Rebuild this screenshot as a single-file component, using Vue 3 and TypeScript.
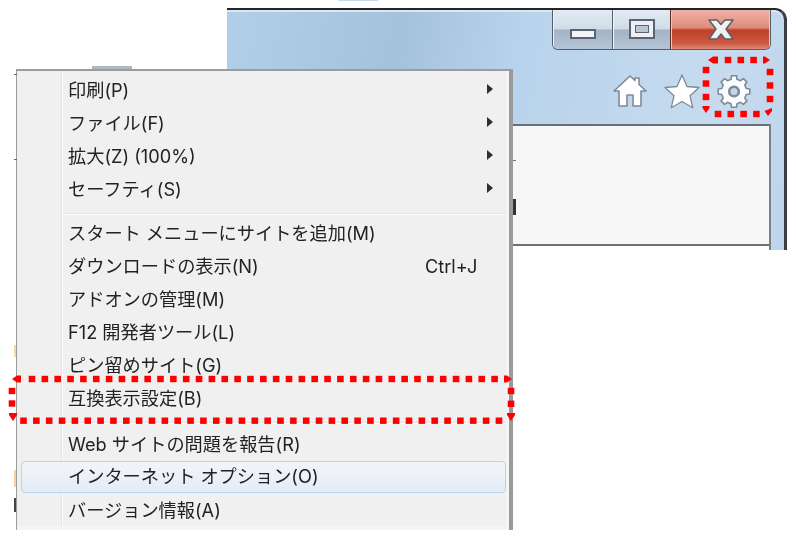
<script setup lang="ts">
interface Item { label: string; arrow?: boolean; shortcut?: string; hover?: boolean }
interface Dot { x: number; y: number }

const groups: Item[][] = [
  [
    { label: '印刷(P)', arrow: true },
    { label: 'ファイル(F)', arrow: true },
    { label: '拡大(Z) (100%)', arrow: true },
    { label: 'セーフティ(S)', arrow: true },
  ],
  [
    { label: 'スタート メニューにサイトを追加(M)' },
    { label: 'ダウンロードの表示(N)', shortcut: 'Ctrl+J' },
    { label: 'アドオンの管理(M)' },
    { label: 'F12 開発者ツール(L)' },
    { label: 'ピン留めサイト(G)' },
    { label: '互換表示設定(B)' },
  ],
  [
    { label: 'Web サイトの問題を報告(R)' },
    { label: 'インターネット オプション(O)', hover: true },
    { label: 'バージョン情報(A)' },
  ],
]

function run(x: number, y: number, dx: number, dy: number, n: number): Dot[] {
  return Array.from({ length: n }, (_, i) => ({ x: x + dx * i, y: y + dy * i }))
}

const dots: Dot[] = [
  ...run(728, 60, 12.8, 0, 3),
  ...run(718, 114, 12.8, 0, 4),
  ...run(706, 70, 0, 13.5, 3),
  ...run(770, 72, 0, 13.5, 3),
  ...run(32, 379, 12.85, 0, 37),
  ...run(23.5, 420.7, 12.85, 0, 38),
  ...run(12, 391, 0, 12.5, 2),
  ...run(511, 391, 0, 12.8, 2),
]

const arrows: string[] = [
  '708,60 713,56.500 718,56.500 718,63.500 713,63.500',
  '770,60 765,56.500 763,56.500 763,63.500 765,63.500',
  '706,113 702.500,108 702.500,106 709.500,106 709.500,108',
  '768,116 764.500,111 772,108 772,111',
  '12,379 17,375.500 21,375.500 21,382.500 17,382.500',
  '512,379 507,375.500 504,375.500 504,382.500 507,382.500',
  '13,421 9,415 9,413 17,413 17,415',
  '511,421 507,415 507,413 515,413 515,415',
]

function gearPath(): string {
  const cx = 17, cy = 16.500, ro = 16, ri = 12.600, n = 8
  const pts: string[] = []
  for (let i = 0; i < n; i++) {
    const a = (i / n) * Math.PI * 2 - Math.PI / 2
    const w = Math.PI / n
    const list: [number, number][] = [
      [ri, a - w * 0.62],
      [ro, a - w * 0.4],
      [ro, a + w * 0.4],
      [ri, a + w * 0.62],
    ]
    for (const [r, t] of list) {
      pts.push(`${(cx + r * Math.cos(t)).toFixed(2)} ${(cy + r * Math.sin(t)).toFixed(2)}`)
    }
  }
  return 'M' + pts.join('L') + 'Z'
}
const gear = gearPath()

const ticks = [
  { x: 14, y: 74, w: 3, h: 1, c: '#666' },
  { x: 14, y: 159, w: 3, h: 1, c: '#666' },
  { x: 14, y: 345, w: 2, h: 12, c: '#f3d9b0' },
  { x: 14, y: 470, w: 2, h: 17, c: '#f5d0a0' },
  { x: 14, y: 498, w: 2, h: 14, c: '#444' },
  { x: 513, y: 160, w: 3, h: 1, c: '#777' },
  { x: 513, y: 199, w: 3, h: 16, c: '#333' },
]
</script>

<template>
  <div class="stage">
    <div class="tab-sliver"></div>
    <div class="tab-stub"></div>
    <div class="window">
      <div class="caption">
        <div class="controls">
          <div class="btn min"><span class="min-glyph"></span></div>
          <div class="btn max"><span class="max-glyph"><span class="max-inner"></span></span></div>
          <div class="btn close">
            <svg width="26" height="21" viewBox="0 0 26 21">
              <path d="M1 1h8l4 4.500L17 1h8l-7 9 7 10h-8l-4-5-4 5H1l7-10z" fill="#f1f1f1" stroke="#5b5f68" stroke-width="1.500" stroke-linejoin="round" />
            </svg>
          </div>
        </div>
      </div>
      <div class="toolbar">
        <svg class="tool" width="34" height="32" viewBox="0 0 34 32">
          <path d="M17 1l5 4.500V3h4v6.500L33 16h-5v15h-8V20h-6v11H6V16H1z" fill="#fff" stroke="#7f8a98" stroke-width="1.600" stroke-linejoin="round" />
        </svg>
        <svg class="tool" width="36" height="35" viewBox="0 0 36 35">
          <path d="M18 1l5 11.500 12 1-9 8.200 2.700 12L18 27.500 7.300 33.700l2.700-12-9-8.200 12-1z" fill="#fff" stroke="#7f8a98" stroke-width="1.300" stroke-linejoin="round" />
        </svg>
        <svg class="tool" width="34" height="33" viewBox="0 0 34 33">
          <path :d="gear" fill="#fbfcfd" stroke="#7f8a98" stroke-width="1.600" stroke-linejoin="round" />
          <circle cx="17" cy="16.500" r="4.800" fill="#c3d5e8" stroke="#7f8a98" stroke-width="2.600" />
        </svg>
      </div>
      <div class="pane">
        <div class="pane-view"></div>
      </div>
    </div>

    <div class="menu">
      <template v-for="(group, g) in groups" :key="g">
        <div v-if="g > 0" class="sep" :class="{ wide: g === 2 }"></div>
        <div v-for="item in group" :key="item.label" class="row" :class="{ hover: item.hover }">
          <span class="label">{{ item.label }}</span>
          <span v-if="item.shortcut" class="shortcut">{{ item.shortcut }}</span>
          <span v-if="item.arrow" class="arrow"></span>
        </div>
      </template>
    </div>

    <span
      v-for="(t, i) in ticks"
      :key="i"
      class="tick"
      :style="{ left: t.x + 'px', top: t.y + 'px', width: t.w + 'px', height: t.h + 'px', background: t.c }"
    ></span>

    <svg class="marks" width="796" height="548" viewBox="0 0 796 548">
      <rect v-for="(d, i) in dots" :key="i" :x="d.x - 3.300" :y="d.y - 3.200" width="6.600" height="6.400" fill="#f00" />
      <polygon v-for="(p, i) in arrows" :key="'a' + i" :points="p" fill="#f00" />
    </svg>
  </div>
</template>

<style>
html, body { margin: 0; background: #fff; }
</style>

<style scoped>
.stage {
  position: relative;
  width: 796px;
  height: 548px;
  overflow: hidden;
  background: #fff;
  font-family: Inter, "Noto Sans CJK JP", sans-serif;
  filter: blur(0.35px);
}
.tab-sliver {
  position: absolute;
  left: 338px;
  top: 0;
  width: 40px;
  height: 1px;
  background: #c5d8ec;
}
.tab-stub {
  position: absolute;
  left: 92px;
  top: 66px;
  width: 40px;
  height: 3px;
  background: #aab8c8;
}
.window {
  position: absolute;
  left: 227px;
  top: 8px;
  width: 560px;
  height: 242px;
  box-sizing: border-box;
  border-top: 2px solid #22252b;
  border-right: 3px solid #3a3f46;
  border-top-right-radius: 12px;
  background: linear-gradient(100deg, #b2cfea 0%, #a5c2dc 30%, #b8d3ec 50%, #c7dbef 85%, #bed5ec 100%);
  box-shadow: inset 0 2px 0 #dfe6ee;
}
.caption {
  display: flex;
  justify-content: flex-end;
  padding-right: 13px;
}
.controls {
  display: flex;
  height: 40px;
  box-sizing: border-box;
  border: 1px solid #565d68;
  border-top: none;
  border-radius: 0 0 6px 6px;
  overflow: hidden;
}
.btn {
  display: flex;
  align-items: center;
  justify-content: center;
  box-sizing: border-box;
  height: 100%;
}
.min {
  width: 60px;
  padding-top: 9px;
  border-right: 1px solid #596270;
  background: linear-gradient(#e3ebf3 0%, #d0dce8 48%, #a4b4c4 52%, #b6c5d5 100%);
  box-shadow: inset 1px 0 0 #eef3f8;
}
.max {
  width: 58px;
  padding-bottom: 2px;
  border-right: 1px solid #5a2a22;
  background: linear-gradient(#e3ebf3 0%, #d0dce8 48%, #a4b4c4 52%, #b6c5d5 100%);
  box-shadow: inset 1px 0 0 #eef3f8;
}
.close {
  width: 99px;
  background: linear-gradient(#efb1a6 0%, #dd8c7a 45%, #bc4128 52%, #cc5a42 85%, #de8a78 100%);
  box-shadow: inset 1px 0 0 #f2c6bc, inset -1px 0 0 #f2c6bc;
}
.min-glyph {
  display: block;
  width: 26px;
  height: 10px;
  box-sizing: border-box;
  border: 2px solid #5b6472;
  background: #f3f4f6;
}
.max-glyph {
  display: flex;
  align-items: center;
  justify-content: center;
  width: 26px;
  height: 20px;
  box-sizing: border-box;
  border: 2px solid #5b6472;
  background: #eef0f3;
}
.max-inner {
  display: block;
  width: 14px;
  height: 8px;
  box-sizing: border-box;
  border: 1px solid #5b6472;
  background: #b9c6d4;
}
.toolbar {
  display: flex;
  justify-content: flex-end;
  align-items: center;
  gap: 17px;
  height: 74px;
  box-sizing: border-box;
  padding: 8px 33px 0 0;
}
.tool { display: block; }
.pane {
  height: 126px;
  margin-right: 13px;
  box-sizing: border-box;
  background: #fff;
  border-right: 2px solid #7a8288;
}
.pane-view {
  height: 122px;
  box-sizing: border-box;
  background: #f7f7f7;
  border-top: 2px solid #667078;
  border-bottom: 2px solid #6f6f6f;
}
.menu {
  position: absolute;
  left: 16px;
  top: 69px;
  width: 497px;
  height: 461px;
  box-sizing: border-box;
  padding: 3px 3px 0 2px;
  border-top: 2px solid #9c9c9c;
  border-left: 1px solid #9c9c9c;
  border-right: 4px solid #9a9a9a;
  background:
    linear-gradient(#e4e4e4, #e4e4e4) 44px 0 / 1px 455px no-repeat,
    linear-gradient(#fafafa, #fafafa) 45px 0 / 1px 455px no-repeat,
    linear-gradient(#f5f5f5, #f5f5f5) 0 100% / 100% 4px no-repeat,
    linear-gradient(#f5f5f5, #f5f5f5) 100% 0 / 3px 100% no-repeat,
    #f0f0f0;
}
.row {
  position: relative;
  display: flex;
  align-items: center;
  height: 33px;
  box-sizing: border-box;
  padding-left: 49px;
  padding-bottom: 1px;
  font-size: 18.200px;
  line-height: 31px;
  color: #222;
  white-space: nowrap;
}
.row.hover {
  height: 32px;
  margin-bottom: 1px;
  border: 1.500px solid #b4d2f5;
  border-radius: 4px;
  margin-left: 2px;
  padding-left: 46px;
  background: linear-gradient(#f3f4f8, #e5ecf6);
}
.shortcut {
  position: absolute;
  left: 406px;
}
.arrow {
  position: absolute;
  left: 468px;
  top: 10px;
  width: 0;
  height: 0;
  border-left: 6px solid #2f2f2f;
  border-top: 5px solid transparent;
  border-bottom: 5px solid transparent;
}
.sep {
  height: 11px;
  margin-left: 44px;
  box-sizing: border-box;
  background: linear-gradient(#e2e2e2 0 1px, #fff 1px 2px, transparent 2px) 0 7px / 100% 2px no-repeat;
}
.sep.wide { height: 13px; }
.tick { position: absolute; }
.marks { position: absolute; left: 0; top: 0; }
</style>
